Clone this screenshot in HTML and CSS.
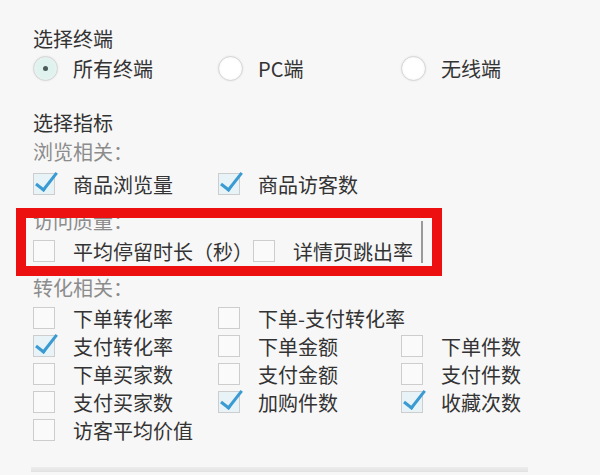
FILE: index.html
```html
<!DOCTYPE html>
<html lang="zh-CN">
<head>
    <meta charset="UTF-8">
    <meta name="viewport" content="width=device-width, initial-scale=1.0">
    <title>选择指标</title>
    <link rel="stylesheet" href="styles.css">
</head>
<body>
    <div class="panel">
        <div class="title">选择终端</div>
        <div class="grid radios">
            <label class="opt"><span class="radio on"></span>所有终端</label>
            <label class="opt"><span class="radio"></span>PC端</label>
            <label class="opt"><span class="radio"></span>无线端</label>
        </div>

        <div class="title t2">选择指标</div>
        <div class="group g1">浏览相关：</div>
        <div class="grid first">
            <label class="opt"><span class="box checked"></span>商品浏览量</label>
            <label class="opt"><span class="box checked"></span>商品访客数</label>
        </div>

        <div class="group g2">访问质量：</div>
        <div class="row">
            <label class="opt"><span class="box"></span>平均停留时长（秒）</label>
            <label class="opt"><span class="box"></span>详情页跳出率</label>
        </div>

        <div class="group g3">转化相关：</div>
        <div class="grid conv">
            <label class="opt"><span class="box"></span>下单转化率</label>
            <label class="opt wide"><span class="box"></span>下单-支付转化率</label>
            <label class="opt"><span class="box checked"></span>支付转化率</label>
            <label class="opt"><span class="box"></span>下单金额</label>
            <label class="opt"><span class="box"></span>下单件数</label>
            <label class="opt"><span class="box"></span>下单买家数</label>
            <label class="opt"><span class="box"></span>支付金额</label>
            <label class="opt"><span class="box"></span>支付件数</label>
            <label class="opt"><span class="box"></span>支付买家数</label>
            <label class="opt"><span class="box checked"></span>加购件数</label>
            <label class="opt"><span class="box checked"></span>收藏次数</label>
            <label class="opt"><span class="box"></span>访客平均价值</label>
        </div>

        <div class="foot-line"></div>
    </div>

    <!-- annotation box drawn over the screenshot -->
    <div class="highlight"><span class="edge"></span></div>
</body>
</html>
```

FILE: styles.css
```css
* { box-sizing: border-box; }
body {
    margin: 0;
    background: #f7f7f7;
    font-family: "Noto Sans CJK SC", "DejaVu Sans", sans-serif;
    font-size: 20px;
    color: #333;
}
.panel { padding: 26px 0 0 33px; }
.title { height: 26px; line-height: 26px; }
.title.t2 { margin-top: 26px; }
.group { height: 26px; line-height: 26px; color: #8c8c8c; }
.group.g1 { margin-top: 3px; }
.group.g2 { margin-top: 10px; }
.group.g3 { margin-top: 10px; }

.grid {
    display: grid;
    grid-template-columns: 185px 183px auto;
}
.grid.radios { height: 32px; }
.grid.first { margin-top: 5px; }
.grid.conv { margin-top: 3px; }
.conv .wide { grid-column: span 2; }

.row { display: flex; margin-top: 3px; }

.opt {
    display: flex;
    align-items: center;
    height: 28px;
    white-space: nowrap;
}
.radios .opt { height: 32px; }

.radio {
    position: relative;
    width: 25px;
    height: 25px;
    margin-right: 15px;
    border: 1px solid #d4d4d4;
    border-radius: 50%;
    background: radial-gradient(circle, #fff 55%, #efefef 100%);
    box-shadow: 0 0 2px #e2e2e2;
}
.radio.on { background: radial-gradient(circle, #dff2ee 40%, #eaf4f2 100%); }
.radio.on::after {
    content: "";
    position: absolute;
    left: 9px;
    top: 9px;
    width: 5px;
    height: 5px;
    border-radius: 50%;
    background: #4a5a58;
}

.box {
    position: relative;
    width: 22px;
    height: 22px;
    margin-right: 18px;
    border: 1px solid #cdcdcd;
    background: #fafafa;
}
.box.checked { background: #e8f3f7; }
.box.checked::after {
    content: "";
    position: absolute;
    left: 7px;
    top: -6px;
    width: 8px;
    height: 20px;
    border: solid #3a9bd2;
    border-width: 0 3px 3px 0;
    transform: rotate(38deg);
}

.foot-line {
    width: 497px;
    height: 5px;
    margin-top: 23px;
    margin-left: -2px;
    background: linear-gradient(#ededed, #e2e2e2);
}

.highlight {
    position: absolute;
    left: 16px;
    top: 208px;
    width: 426px;
    height: 68px;
    border: 10px solid #ec1010;
}
.highlight .edge {
    position: absolute;
    left: 395px;
    top: 3px;
    width: 2px;
    height: 42px;
    background: #9a9a9a;
}
```
